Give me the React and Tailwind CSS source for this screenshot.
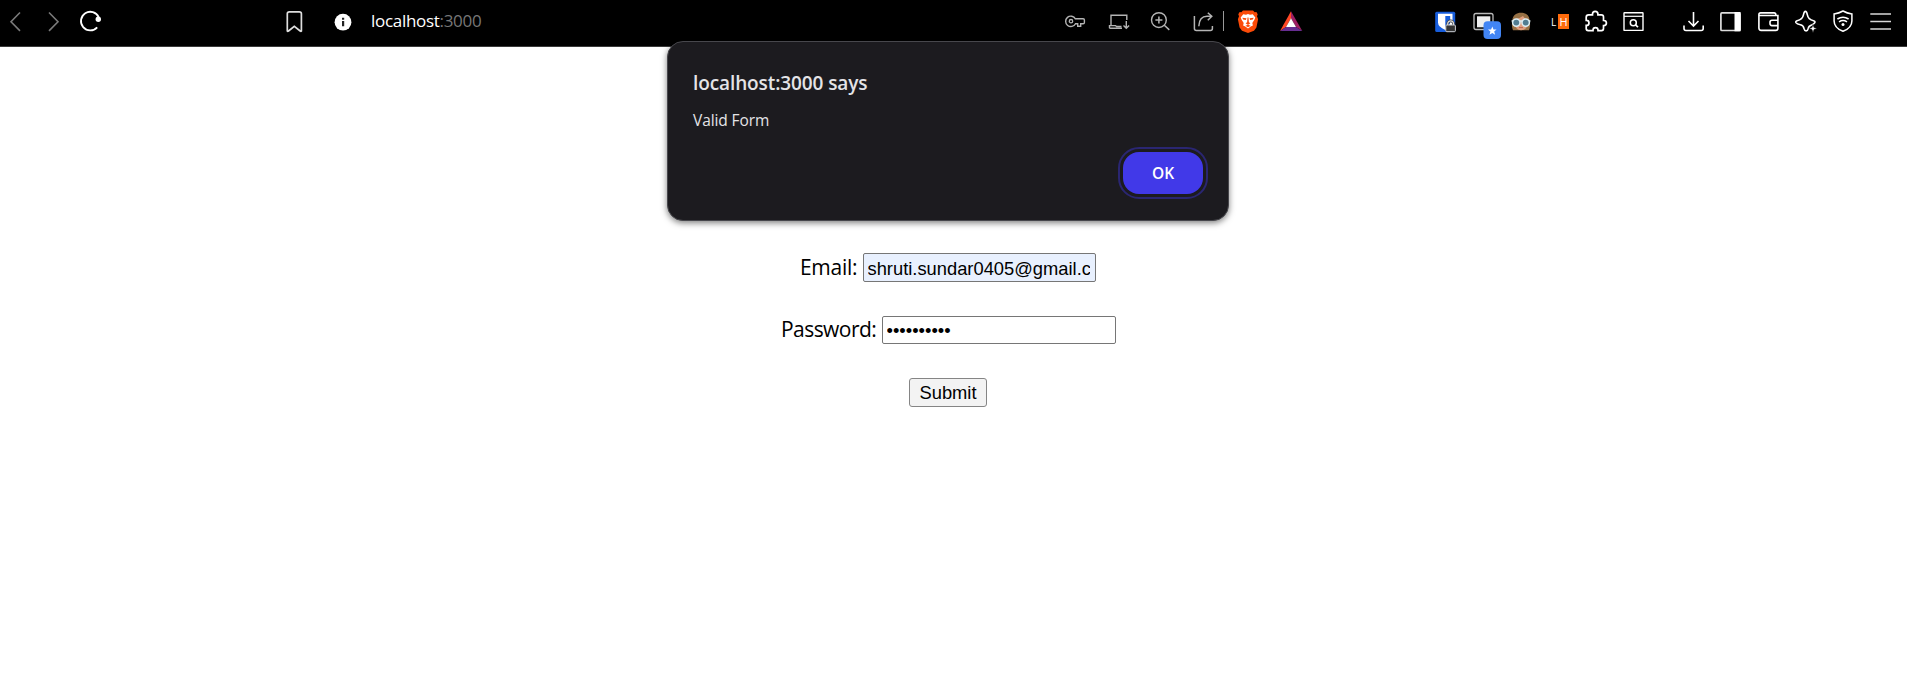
function Icon({ className = '', stroke = 'stroke-white', children }) {
  return (
    <svg viewBox="0 0 24 24" className={`h-6 w-6 shrink-0 overflow-visible fill-none ${stroke} ${className}`} strokeWidth="1.6">
      {children}
    </svg>
  );
}

function Navigation() {
  return (
    <>
      <Icon className="ml-[3px]" stroke="stroke-[#7a7a7a]"><path d="M17 2.500 8 11.700l9 9.200" /></Icon>
      <Icon className="ml-[14px]" stroke="stroke-[#7a7a7a]"><path d="M8 2.500l9 9.200-9 9.200" /></Icon>
      <Icon className="ml-[14px]">
        <path d="M19.700 7.200A9.300 9.300 0 1 0 18.200 17.300" strokeWidth="1.800" />
        <circle cx="19.300" cy="9.300" r="2.700" className="fill-white stroke-none" />
      </Icon>
    </>
  );
}

function AddressBar() {
  return (
    <>
      <Icon className="ml-[179px]" stroke="stroke-[#dedede]">
        <path d="M5.300 21V3.800Q5.300 1.800 7.300 1.800h10Q19.400 1.800 19.400 3.800V21q-.4.600-1.200 0l-5.900-4.700L6.500 21q-.8.600-1.200 0z" strokeWidth="1.700" />
      </Icon>
      <Icon className="ml-[25px]" stroke="stroke-none">
        <circle cx="12" cy="12.200" r="8.400" fill="#fff" />
        <path d="M11 11h2.200v5.200H11zM11 7.700h2.200v2.100H11z" fill="#222" />
      </Icon>
      <div className="ml-4 w-[112px] shrink-0 whitespace-nowrap font-['Open_Sans',sans-serif] text-[17px] leading-[22px] tracking-[-0.3px] text-white">
        localhost<span className="text-[#777]">:3000</span>
      </div>
    </>
  );
}

function PageActions() {
  return (
    <>
      <Icon className="ml-[580px]" stroke="stroke-[#b4b4b4]">
        <path d="M12.400 8.800A5.200 5.200 0 1 0 12.500 13.700h2.200v2.500h3v-2.500h2.400q1.300 0 1.300-1.200V10q0-1.200-1.300-1.200z" strokeWidth="1.400" />
        <circle cx="8" cy="11.200" r="1.700" strokeWidth="1.300" />
      </Icon>
      <Icon className="ml-5" stroke="stroke-[#b4b4b4]">
        <path d="M4 14V5.200h15.800V10M4 14v2M2.500 18.200h12.500M2.500 18.200v-2.600h6l1 .9h5M19.300 11v7.200M16.500 15.500l2.800 2.800 2.800-2.800" strokeWidth="1.400" />
      </Icon>
      <Icon className="ml-[18px]" stroke="stroke-[#b4b4b4]">
        <circle cx="9.900" cy="10.100" r="7.400" strokeWidth="1.400" />
        <path d="M15.300 15.300l5 4.600M9.900 6.600v7M6.400 10.100h7" strokeWidth="1.500" />
      </Icon>
      <Icon className="ml-[19px]" stroke="stroke-[#b4b4b4]">
        <path d="M2.400 6v12.400q0 2 2 2h14q2 0 2-2V16M6.800 16.200Q7.300 6.300 15 6.300h4.300M15.800 2.700l4 3.600-4 4" strokeWidth="1.500" />
      </Icon>
      <div className="ml-[7px] mt-px h-5 w-px shrink-0 bg-[#999]" />
      <Icon className="ml-3" stroke="stroke-none">
        <path d="M7 .4h10l1.700 1.800 1.700-.1 1.300 2.100-.7 2 1.100 3-1.700 8.200-2.400 3.300L12 23l-6-2.300-2.400-3.300L1.900 9.200l1.100-3-.7-2 1.300-2.100 1.700.1z" fill="#fb4b08" />
        <path d="M7.300 4.200l2.700.5 2-.6 2 .6 2.700-.5 2.600 3.200-.9 2.400-2.100 3.300.6 2.300-2.200 1.200L12 18.600l-2.700-2-2.200-1.200.6-2.300-2.100-3.300-.9-2.400z" fill="#fff" />
        <path d="M6.300 7.700l4.200.6-.7 1.700-2.600-.6zM17.700 7.700l-4.200.6.700 1.700 2.600-.6zM11.500 7.500h1l.4 4.700 1.500 1.100-2.400 1.600-2.400-1.600 1.500-1.100zM9.400 15.700l2.600-.9 2.600.9-2.600 1.600z" fill="#fb4b08" />
      </Icon>
      <Icon className="ml-[19px]" stroke="stroke-none">
        <path d="M12 1.200v7L7 17 1 21z" fill="#ff4725" />
        <path d="M12 1.200L23.300 21 17 17l-5-8.800z" fill="#9e1f63" />
        <path d="M1 21l6-4h10l6.300 4z" fill="#662d91" />
        <path d="M12 8.200l5 8.800H7z" fill="#fff" />
      </Icon>
    </>
  );
}

function Extensions() {
  return (
    <>
      <Icon className="ml-[130px]" stroke="stroke-none">
        <rect x="2.200" y="1.800" width="20" height="20.200" rx="1.500" fill="#175ddc" />
        <path d="M5 3.800h14.500v8.600q0 4-7.200 7.700Q5 16.500 5 12.400z" fill="#fff" />
        <path d="M12.300 6h4.900v6.400q0 2.400-4.900 5z" fill="#175ddc" />
        <path d="M14.700 15.500v-1.700a2.900 2.900 0 0 1 5.800 0v1.700" stroke="#444" strokeWidth="2.600" />
        <path d="M14.700 15.500v-1.700a2.900 2.900 0 0 1 5.800 0v1.700" stroke="#ddd" strokeWidth="1.200" />
        <rect x="12.800" y="15" width="9.600" height="6.700" rx="1" fill="#333" stroke="#ccc" strokeWidth="1" />
      </Icon>
      <Icon className="ml-[14px]">
        <rect x="3" y="3.500" width="19" height="16" rx="2" stroke="#bbb" strokeWidth="1.300" />
        <rect x="6" y="6.300" width="13.300" height="11" fill="#eee" stroke="none" />
        <rect x="12.500" y="11.300" width="17.500" height="17.700" rx="4" fill="#4285f4" stroke="none" />
        <path d="M21.300 16.600l1.200 3h3.100l-2.400 2 .9 3.100-2.800-1.800-2.800 1.800.9-3.100-2.400-2h3.100z" fill="#fff" stroke="none" />
      </Icon>
      <Icon className="ml-[14px]" stroke="stroke-none">
        <path d="M4 20.200C2.400 16.800 3 13 3.300 10 4 5 7.500 2.700 12 2.700S20 5 20.700 10c.3 3 .9 6.800-.7 10.200z" fill="#967044" />
        <path d="M6 9q5-.5 8-3 1.500 3 4.500 3.500V15q-1 5-6.500 5.300Q7 20 6 15z" fill="#e0a080" />
        <path d="M2.600 11h18.800" stroke="#dce8ec" strokeWidth="1.600" />
        <circle cx="7.300" cy="12.600" r="3.700" fill="#527d91" stroke="#dceef4" strokeWidth="1.500" />
        <circle cx="16.700" cy="12.600" r="3.700" fill="#527d91" stroke="#dceef4" strokeWidth="1.500" />
        <path d="M10 17.600h4" stroke="#bd6650" strokeWidth="1" />
      </Icon>
      <div className="ml-[15px] mt-1 flex h-[15px] w-6 shrink-0 items-center pl-[3px] font-['Open_Sans',sans-serif] text-[10px] leading-none text-white">
        <span className="w-[7px]">L</span>
        <span className="flex h-[15px] w-[11px] items-center justify-center bg-[#ff6b0b] text-[11px]">H</span>
      </div>
      <Icon className="ml-3">
        <path d="M2.200 7.200q0-2.400 2.400-2.400H8.500V4a2.700 2.700 0 0 1 5.400 0v.8h3.400q2.200 0 2.200 2.200v3.500h.3a2.600 2.600 0 0 1 0 5.200h-.3v2.900q0 2-2 2H14v-.5a2.500 2.500 0 0 0-5 0v.5H4.200q-2 0-2-2v-3.200h.3a2.400 2.400 0 0 0 0-5h-.3z" strokeWidth="1.700" />
      </Icon>
      <Icon className="ml-[14px]">
        <rect x="2" y="2.800" width="19" height="17.600" rx=".5" strokeWidth="1.400" />
        <path d="M2 6.300h19" strokeWidth="1.200" />
        <circle cx="11.300" cy="12.700" r="3" strokeWidth="1.500" />
        <path d="M13.500 14.800l2.500 2.300" strokeWidth="1.700" />
      </Icon>
    </>
  );
}

function BrowserTools() {
  return (
    <>
      <Icon className="ml-9">
        <path d="M11.500 2v14M6.500 11l5 5 5-5M2 15.500v3q0 2 2 2h15.200q2 0 2-2v-3" strokeWidth="1.600" />
      </Icon>
      <Icon className="ml-[13px]">
        <rect x="1.900" y="2.900" width="19.200" height="17.600" rx="1" strokeWidth="1.700" stroke="#ddd" />
        <path d="M15.500 2h6v19.300h-6z" fill="#fff" stroke="none" />
      </Icon>
      <Icon className="ml-[14px]">
        <path d="M18.800 5.500V4.600q0-1.700-1.700-1.700H3.600q-1.700 0-1.700 1.700v13.500q0 2.300 2.300 2.300h14.500q2.200 0 2.200-2.200V5.500H2" />
        <path d="M21 10.200h-6q-2 0-2 2v1.400q0 2 2 2h6" />
      </Icon>
      <Icon className="ml-[13px]">
        <path d="M18 15q-3 1-3.400 3.500-.5 2.300-2.100 2.300t-2.100-2.300q-.5-3.200-3.600-3.900-3.500-.6-4.500-2.100-.5-1.200 1.200-1.900 5.500-1 6.400-6 .6-3.300 1.900-3.300t1.900 3.300q.9 5 6.200 6 2 .7 1.300 1.900-.5 1-3.200 2.500z" strokeWidth="1.600" transform="translate(-.4 .1)" />
        <path d="M19 14.500l1 3.100 3.100 1-3.100 1-1 3.100-1-3.100-3.100-1 3.100-1z" fill="#fff" stroke="#000" strokeWidth=".5" />
      </Icon>
      <Icon className="ml-[13px]">
        <path d="M12 1q4 2.200 8.900 2.900v7q0 6.800-8.900 10.400Q3.100 17.700 3.100 10.900v-7Q8 3.200 12 1z" strokeWidth="1.500" />
        <path d="M6.400 9q5.600-3.600 11.200 0M8 11.800q4-2.500 8 0" strokeWidth="1.500" />
        <circle cx="12" cy="14.500" r="1.500" fill="#fff" stroke="none" />
      </Icon>
      <Icon className="ml-[14px]" stroke="stroke-[#d8d8d8]"><path d="M1.300 4h20.700M1.300 11.500h20.700M1.300 19h20.700" strokeWidth="1.600" /></Icon>
    </>
  );
}

function AlertDialog() {
  return (
    <div className="absolute left-[667px] top-[41px] flex h-[180px] w-[562px] flex-col rounded-2xl border border-[#47474c] bg-[#1c1b1f] px-[25px] font-['Open_Sans',sans-serif] text-[#e4e4e7] shadow-[0_2px_6px_rgba(0,0,0,0.5)]">
      <h1 className="mt-[28px] text-[19px] font-semibold leading-[26px] tracking-[-0.1px]">localhost:3000 says</h1>
      <p className="mt-[13px] text-[15.5px] leading-[22px] tracking-[-0.1px]">Valid Form</p>
      <button className="mt-[21px] h-[42px] w-20 self-end rounded-2xl bg-[#4139e8] pt-0.5 text-[15.5px] font-semibold text-white outline-2 outline-offset-3 outline-[#2a2672]">OK</button>
    </div>
  );
}

export default function App() {
  return (
    <div className="relative h-[688px] w-[1907px] overflow-hidden bg-white">
      <header className="flex h-[47px] items-start border-b border-[#3a3a3a] bg-black pt-[10px]">
        <Navigation />
        <AddressBar />
        <PageActions />
        <Extensions />
        <BrowserTools />
      </header>
      <form className="flex flex-col pt-[206px] font-['Open_Sans',sans-serif] text-[21px] leading-[28px] text-black">
        <div className="ml-[800px] flex">
          <label htmlFor="email" className="w-[63px] whitespace-nowrap tracking-[-0.3px]">Email:</label>
          <input id="email" readOnly defaultValue="shruti.sundar0405@gmail.com" className="h-[29px] w-[233px] rounded-[2px] border border-[#767676] bg-[#e8f0fe] pl-[3.5px] pr-[5px] pt-0.5 font-['Liberation_Sans',sans-serif] text-[18.333px]" />
        </div>
        <div className="ml-[781px] mt-[34px] flex">
          <label htmlFor="password" className="-mt-px w-[101px] whitespace-nowrap tracking-[-0.55px]">Password:</label>
          <input id="password" type="password" readOnly defaultValue="abcdefghij" className="h-7 w-[234px] rounded-[2px] border border-[#767676] bg-white px-[3.5px] pt-0.5 font-['Liberation_Sans',sans-serif] text-[18.333px]" />
        </div>
        <button type="button" className="ml-[909px] mt-[34px] h-[29px] w-[78px] rounded-[3px] border border-[#858585] bg-[#f3f3f3] font-['Liberation_Sans',sans-serif] text-[18.333px] leading-[26px]">Submit</button>
      </form>
      <AlertDialog />
    </div>
  );
}
